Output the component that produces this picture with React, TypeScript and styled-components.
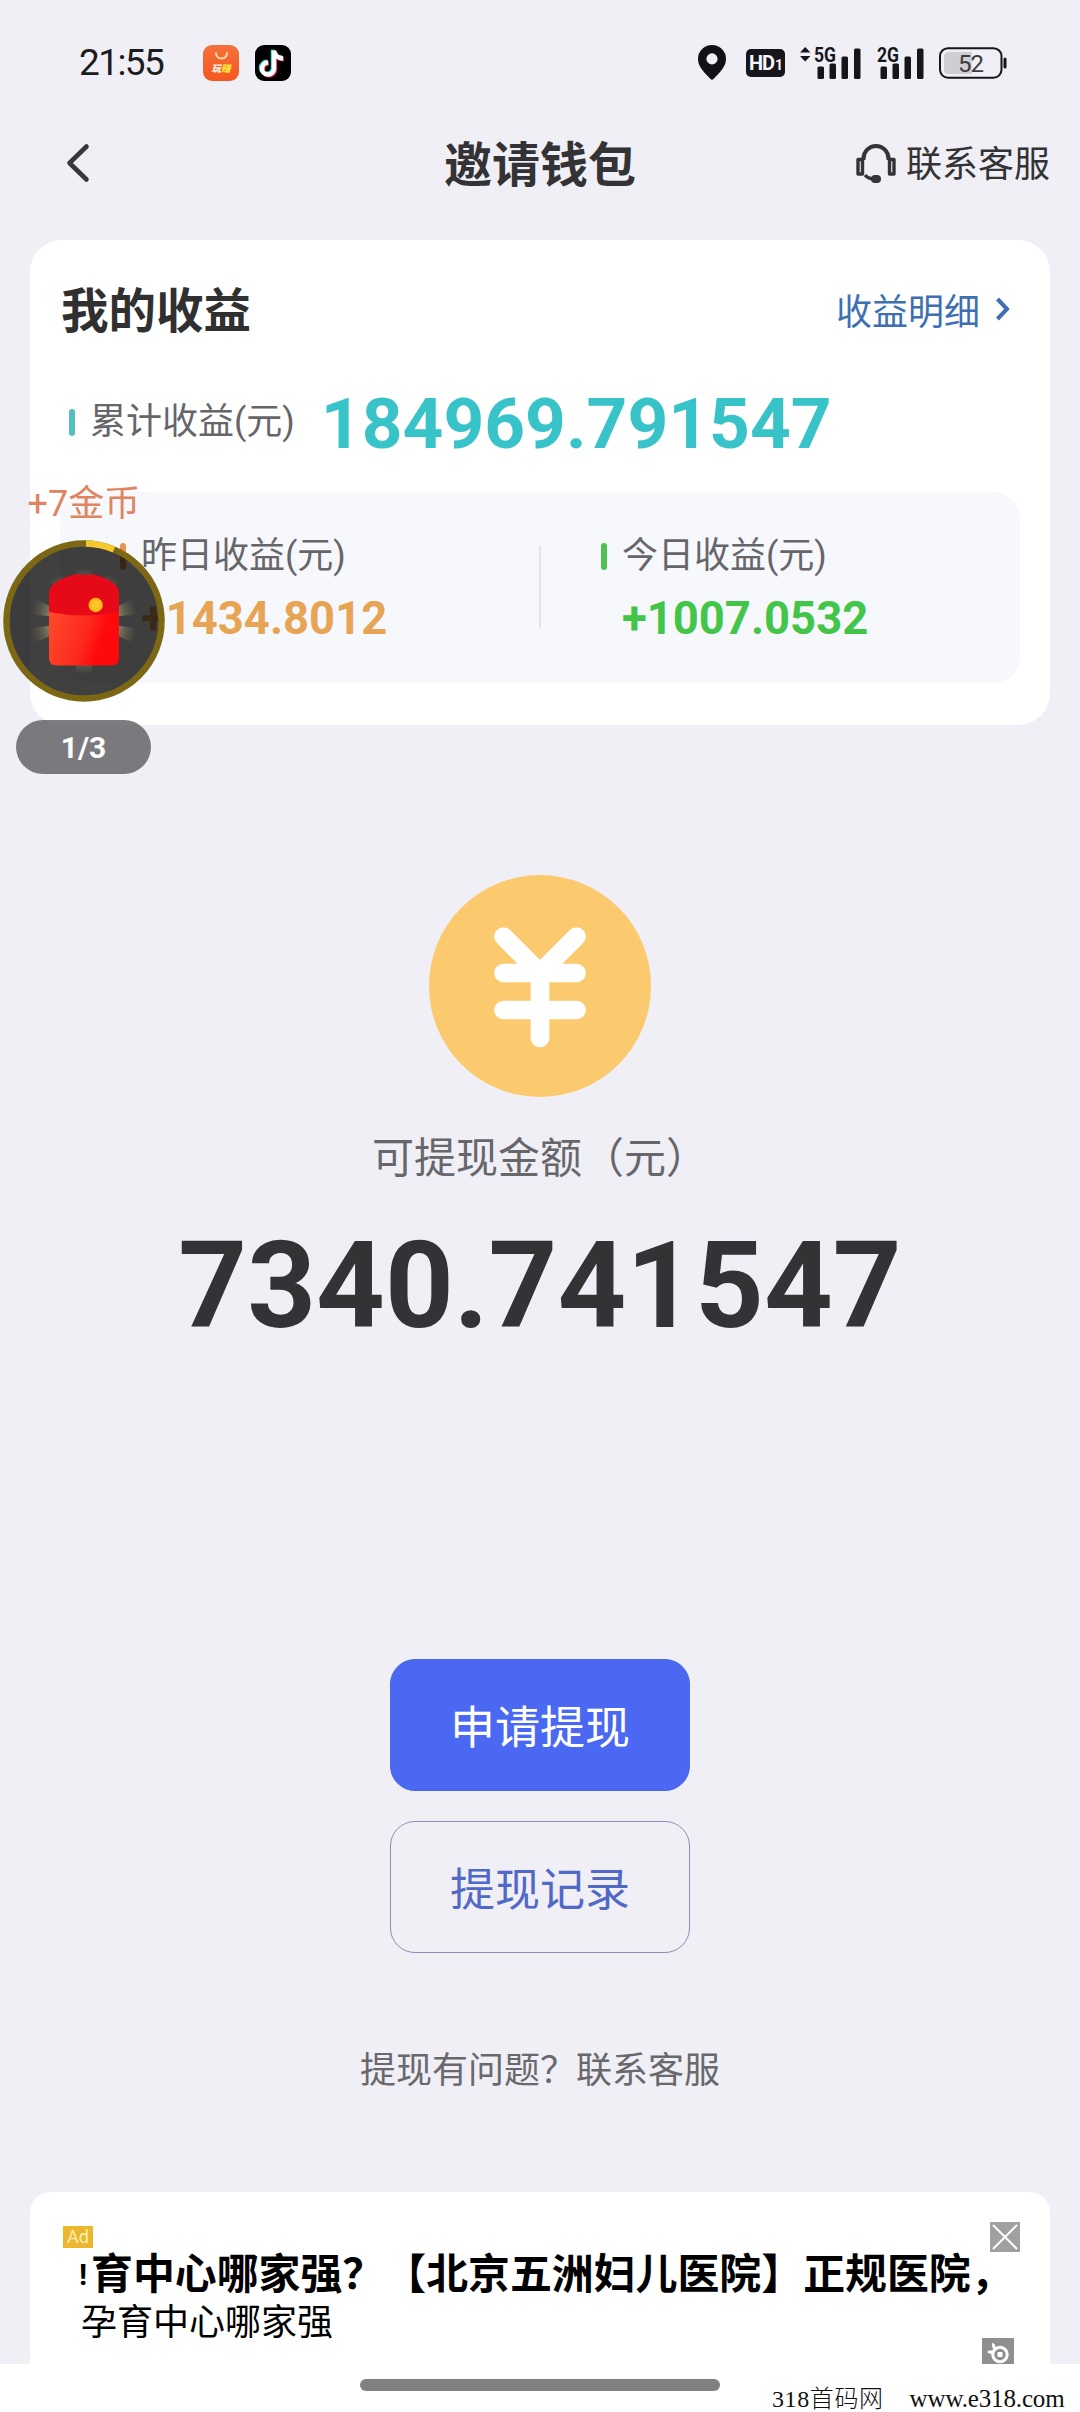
import React from 'react';
import styled, { createGlobalStyle } from 'styled-components';

const GlobalStyle = createGlobalStyle`
  * { box-sizing: border-box; }
  body { margin: 0; background: #f0eff6; }
`;

const Page = styled.div`
  position: relative;
  width: 1080px;
  height: 2412px;
  overflow: hidden;
  display: flex;
  flex-direction: column;
  background: #f0eff6;
  color: #333335;
  font-family: Roboto, "Noto Sans CJK SC", sans-serif;
`;

const StatusBar = styled.header`
  height: 124px;
  padding: 1px 73px 0 79px;
  display: flex;
  align-items: center;
  justify-content: space-between;
`;

const StatusGroup = styled.div`
  display: flex;
  align-items: center;
`;

const Clock = styled.span`
  width: 124px;
  font-size: 37px;
  line-height: 44px;
  letter-spacing: -1.6px;
  color: #1b1b20;
`;

const AppBadge = styled.span<{ $bg: string }>`
  width: 36px;
  height: 36px;
  margin-right: 16px;
  border-radius: 9px;
  display: flex;
  flex-direction: column;
  align-items: center;
  background: ${(p) => p.$bg};
`;

const BadgeText = styled.span`
  font-size: 9.5px;
  line-height: 12px;
  font-weight: 900;
  font-style: italic;
  color: #fff3e8;
  b { color: #ffe13a; }
`;

const HdBadge = styled.span`
  width: 39px;
  height: 28px;
  margin-left: 20px;
  border-radius: 5px;
  display: flex;
  align-items: baseline;
  justify-content: center;
  background: #15151b;
  color: #f5f4fa;
  font-weight: 700;
  font-size: 20px;
  line-height: 29px;
  letter-spacing: -1px;
  small { font-size: 14px; margin-left: 1px; }
`;

const NavBar = styled.nav`
  height: 116px;
  padding: 0 30px 35px;
  display: grid;
  grid-template-columns: 1fr auto 1fr;
  align-items: center;
`;

const BackIcon = styled.svg`
  margin: 0 0 3px 30px;
`;

const Title = styled.h1`
  margin: 0;
  padding-top: 3px;
  font-size: 48px;
  line-height: 56px;
  font-weight: 700;
`;

const Support = styled.div`
  justify-self: end;
  display: flex;
  align-items: center;
  gap: 10px;
  font-size: 36px;
  line-height: 44px;
`;

const HeadsetIcon = styled.svg`
  margin-bottom: 3px;
`;

const IncomeCard = styled.section`
  margin: 0 30px;
  height: 485px;
  padding: 40px 30px 0;
  border-radius: 32px;
  background: #fff;
  display: flex;
  flex-direction: column;
`;

const CardHead = styled.div`
  height: 64px;
  display: flex;
  align-items: center;
  justify-content: space-between;
`;

const CardTitle = styled.h2`
  margin: 0 0 0 1px;
  font-size: 47.5px;
  line-height: 64px;
  font-weight: 700;
  color: #303030;
`;

const DetailLink = styled.a`
  display: flex;
  align-items: center;
  gap: 15px;
  margin-right: 10px;
  padding-top: 2px;
  font-size: 36px;
  line-height: 64px;
  color: #3d70b2;
`;

const TotalRow = styled.div`
  height: 76px;
  margin-top: 40px;
  padding-left: 9px;
  display: flex;
  align-items: center;
`;

const Marker = styled.i<{ $color: string }>`
  width: 6px;
  height: 27px;
  border-radius: 3px;
  margin-right: 15px;
  background: ${(p) => p.$color};
`;

const Label = styled.span`
  font-size: 36px;
  line-height: 44px;
  color: #66666a;
`;

const TotalAmount = styled.strong`
  margin-left: 26px;
  padding-top: 4px;
  font-size: 71.2px;
  line-height: 76px;
  font-weight: 700;
  color: #38c3c9;
`;

const DayPanel = styled.div`
  height: 191px;
  margin-top: 32px;
  border-radius: 26px;
  background: #f7f8fc;
  display: grid;
  grid-template-columns: 479px 2px 479px;
`;

const DayColumn = styled.div`
  padding: 42px 0 0 60px;
`;

const DayDivider = styled.div`
  height: 82px;
  margin-top: 54px;
  background: #e2e4ea;
`;

const DayLabel = styled.div`
  height: 44px;
  display: flex;
  align-items: center;
`;

const DayAmount = styled.strong<{ $color: string }>`
  display: block;
  margin: 15px 0 0 21px;
  font-size: 45.4px;
  line-height: 52px;
  font-weight: 700;
  color: ${(p) => p.$color};
`;

const Balance = styled.main`
  margin-top: 150px;
  height: 784px;
  display: flex;
  flex-direction: column;
  align-items: center;
`;

const BalanceLabel = styled.div`
  margin-top: 36px;
  font-size: 42px;
  line-height: 52px;
  color: #66666b;
`;

const BalanceAmount = styled.strong`
  margin-top: 29px;
  font-size: 120px;
  line-height: 144px;
  font-weight: 700;
`;

const Actions = styled.div`
  display: flex;
  flex-direction: column;
  align-items: center;
  gap: 30px;
`;

const ActionButton = styled.button<{ $primary?: boolean }>`
  width: 300px;
  height: 132px;
  padding: 7px 0 0;
  border-radius: 25px;
  border: 1px solid ${(p) => (p.$primary ? '#4a69e0' : '#8a8db6')};
  background: ${(p) => (p.$primary ? '#4a68f2' : 'transparent')};
  color: ${(p) => (p.$primary ? '#fff' : '#5068c6')};
  font: 400 45px/60px Roboto, "Noto Sans CJK SC", sans-serif;
`;

const HelpText = styled.p`
  margin: 95px 0 0;
  text-align: center;
  font-size: 36px;
  line-height: 46px;
  color: #69696d;
`;

const AdCard = styled.section`
  margin: 98px 30px 0;
  height: 172px;
  padding: 30px 30px 0 33px;
  border-radius: 20px 20px 0 0;
  background: #fff;
  display: grid;
  grid-template-columns: 1fr auto;
  grid-template-rows: 30px 46px 40px 26px;
  color: #000;
`;

const AdTag = styled.span`
  width: 30px;
  height: 22px;
  margin-top: 4px;
  background: #ecb62e;
  color: #fdf0b4;
  font-size: 18px;
  line-height: 22px;
  text-align: center;
`;

const CloseIcon = styled.svg`
  justify-self: end;
`;

const AdHeadline = styled.div`
  grid-column: 1 / -1;
  display: flex;
  align-items: center;
  padding-left: 16px;
  white-space: nowrap;
  font-size: 41.9px;
  line-height: 46px;
  font-weight: 700;
`;

const ClippedMark = styled.span`
  width: 12px;
  font-size: 30px;
  line-height: 46px;
`;

const AdSub = styled.div`
  grid-column: 1 / -1;
  padding-left: 18px;
  font-size: 36px;
  line-height: 50px;
  height: 40px;
`;

const AdLogoSlot = styled.div`
  grid-column: 2;
  margin-right: 6px;
  height: 26px;
`;

const GestureArea = styled.footer`
  flex: 1;
  background: #fff;
  padding-top: 15px;
`;

const HomeBar = styled.div`
  width: 360px;
  height: 12px;
  margin: 0 auto;
  border-radius: 6px;
  background: #808080;
`;

const Watermark = styled.div`
  position: absolute;
  left: 772px;
  bottom: 0;
  display: flex;
  align-items: baseline;
  gap: 26px;
  white-space: nowrap;
  font-family: "Liberation Serif", "Noto Sans CJK SC", serif;
  font-weight: 300;
  font-size: 24px;
  line-height: 26px;
  letter-spacing: 0.6px;
  color: #111;
`;

const Site = styled.span`
  font-size: 25px;
  letter-spacing: -0.15px;
`;

const FloatingReward = styled.aside`
  position: absolute;
  left: 3px;
  top: 480px;
  width: 162px;
  display: flex;
  flex-direction: column;
`;

const CoinText = styled.span`
  margin-left: 24.5px;
  height: 60px;
  font-size: 36px;
  line-height: 48px;
  color: #e0845f;
`;

const Progress = styled.span`
  width: 135px;
  height: 54px;
  margin: 18px 0 0 13px;
  border-radius: 27px;
  background: rgba(88, 88, 92, 0.78);
  color: #fff;
  font-size: 30px;
  line-height: 55px;
  font-weight: 700;
  text-align: center;
`;

const SignalSvg = styled.svg`
  margin-left: 15px;
  overflow: visible;
`;

function SignalIcon({ label, arrows }: { label: string; arrows?: boolean }) {
  return (
    <SignalSvg width={arrows ? 61 : 48} height="34" viewBox={arrows ? '-14 0 61 34' : '-1 0 48 34'}>
      {arrows && <path d="M-14 6.5 L-8.8 1 L-3.6 6.5 Z M-14 10 L-8.8 15.5 L-3.6 10 Z" fill="#15151b" />}
      <text x="0" y="15.5" textLength="22" lengthAdjust="spacingAndGlyphs" fontFamily="Roboto, sans-serif" fontWeight="700" fontSize="21" fill="#15151b">{label}</text>
      <rect x="3.5" y="20.5" width="6.5" height="12.5" rx="1.5" fill="#15151b" />
      <rect x="15.5" y="17.5" width="6.5" height="15.5" rx="1.5" fill="#15151b" />
      <rect x="27.5" y="10.5" width="6.5" height="22.5" rx="1.5" fill="#15151b" />
      <rect x="40" y="2.5" width="6.5" height="30.5" rx="1.5" fill="#15151b" />
    </SignalSvg>
  );
}

const BatterySvg = styled.svg`
  margin-left: 15px;
`;

const LinkChevron = styled.svg`
  margin-top: -8px;
`;

function RewardDisc() {
  return (
    <svg width="162" height="162" viewBox="0 0 162 162">
      <defs>
        <linearGradient id="pocket" x1="0" y1="0.2" x2="1" y2="0.5">
          <stop offset="0" stopColor="#ff4a2c" />
          <stop offset="0.55" stopColor="#fd2a1c" />
          <stop offset="0.8" stopColor="#ff0a0c" />
        </linearGradient>
        <radialGradient id="rays" gradientUnits="userSpaceOnUse" cx="81" cy="81" r="54">
          <stop offset="0.6" stopColor="#a59b72" stopOpacity="0.85" />
          <stop offset="1" stopColor="#6b6850" stopOpacity="0" />
        </radialGradient>
      </defs>
      <circle cx="81" cy="81" r="78" fill="rgba(0,0,0,0.75)" />
      <circle cx="81" cy="81" r="77.5" fill="none" stroke="#7b6714" strokeWidth="6.5" />
      <path d="M83 3.5 A77.5 77.5 0 0 1 111 9.5" fill="none" stroke="#f3c92f" strokeWidth="6.5" />
      <path
        fill="url(#rays)"
        d="M81 81 L29 58 L29 74 Z M81 81 L29 88 L29 104 Z M81 81 L133 58 L133 74 Z M81 81 L133 88 L133 104 Z M81 81 L73 29 L89 29 Z M81 81 L44 38 L56 30 Z M81 81 L106 30 L118 38 Z M81 81 L72 133 L90 133 Z"
      />
      <path d="M46 62 H116 V118 Q116 125.5 108.5 125.5 H53.5 Q46 125.5 46 118 Z" fill="url(#pocket)" />
      <path d="M46 72 V53 Q46 47 52 43 Q62 36 72 34.5 H90 Q100 36 110 43 Q116 47 116 53 V72 Q81 79 46 72 Z" fill="#e60a18" />
      <circle cx="92.7" cy="65" r="7.2" fill="#fbb713" />
      <circle cx="92.7" cy="65" r="4.5" fill="#f9c62c" />
    </svg>
  );
}

export default function App() {
  return (
    <Page>
      <GlobalStyle />
      <StatusBar>
        <StatusGroup>
          <Clock>21:55</Clock>
          <AppBadge $bg="linear-gradient(#f5703c, #f6571f)">
            <svg width="20" height="18" viewBox="0 0 20 18">
              <path d="M5 8 Q5.5 13.5 10.5 13.5 Q15.5 13.5 16 8" fill="none" stroke="#ffd9a8" strokeWidth="2" strokeLinecap="round" />
            </svg>
            <BadgeText>玩<b>赚</b></BadgeText>
          </AppBadge>
          <AppBadge $bg="#000">
            <svg width="36" height="36" viewBox="0 0 36 36" fill="none" strokeWidth="4.4">
              <path d="M19 5.5 V24 A6 6 0 1 1 13 17.500 M19 6 Q20.5 13 28 13.5" stroke="#25e6df" transform="translate(-1 -0.7)" />
              <path d="M19 5.5 V24 A6 6 0 1 1 13 17.500 M19 6 Q20.5 13 28 13.5" stroke="#f52b54" transform="translate(1 0.9)" />
              <path d="M19 5.5 V24 A6 6 0 1 1 13 17.500 M19 6 Q20.5 13 28 13.5" stroke="#fff" />
            </svg>
          </AppBadge>
        </StatusGroup>
        <StatusGroup>
          <svg width="28" height="35" viewBox="0 0 28 35">
            <path fillRule="evenodd" fill="#111116" d="M14 0 A14 14 0 0 1 28 14 C28 22 21 28 15.5 34 Q14 35.5 12.5 34 C7 28 0 22 0 14 A14 14 0 0 1 14 0 Z M14 8.3 A5.6 5.6 0 1 0 14 19.5 A5.6 5.6 0 1 0 14 8.3 Z" />
          </svg>
          <HdBadge>HD<small>1</small></HdBadge>
          <SignalIcon label="5G" arrows />
          <SignalIcon label="2G" />
          <BatterySvg width="68" height="32" viewBox="0 0 68 32">
            <rect x="1" y="1.2" width="61.5" height="29.5" rx="8" fill="none" stroke="#15151b" strokeWidth="2" />
            <path d="M10 5 H33 V27 H10 Q5 27 5 22 V10 Q5 5 10 5 Z" fill="#cfced4" />
            <rect x="64.5" y="10.5" width="3" height="11" rx="1.5" fill="#15151b" />
            <text x="32" y="24.5" textAnchor="middle" fontFamily="Roboto, sans-serif" fontSize="24" textLength="26" fill="#3a3a40">52</text>
          </BatterySvg>
        </StatusGroup>
      </StatusBar>

      <NavBar>
        <BackIcon width="36" height="40" viewBox="0 0 36 40">
          <path d="M26.5 3.500 L9.5 20 L26.5 36.5" fill="none" stroke="#36363b" strokeWidth="4.6" strokeLinecap="round" strokeLinejoin="round" />
        </BackIcon>
        <Title>邀请钱包</Title>
        <Support>
          <HeadsetIcon width="40" height="39" viewBox="0 0 40 39" fill="none" stroke="#333338" strokeWidth="4">
            <path d="M7.5 16 V14.5 A12.5 12.5 0 0 1 32.5 14.500 V16" />
            <path d="M2 15.500 H6.500 V30 H2 Z M33.500 15.500 H38 V30 H33.500 Z" strokeWidth="3.4" strokeLinejoin="round" />
            <path d="M9 31 Q12 35 19 35" strokeWidth="3.4" />
            <rect x="15" y="31" width="10" height="8" rx="4" fill="#333338" stroke="none" />
          </HeadsetIcon>
          <span>联系客服</span>
        </Support>
      </NavBar>

      <IncomeCard>
        <CardHead>
          <CardTitle>我的收益</CardTitle>
          <DetailLink>
            收益明细
            <LinkChevron width="15" height="26" viewBox="0 0 15 26">
              <path d="M2.5 3 L12 13 L2.5 23" fill="none" stroke="#3d70b2" strokeWidth="4" />
            </LinkChevron>
          </DetailLink>
        </CardHead>
        <TotalRow>
          <Marker $color="#52bfb8" />
          <Label>累计收益(元)</Label>
          <TotalAmount>184969.791547</TotalAmount>
        </TotalRow>
        <DayPanel>
          <DayColumn>
            <DayLabel><Marker $color="#e6944f" /><Label>昨日收益(元)</Label></DayLabel>
            <DayAmount $color="#e6a454">+1434.8012</DayAmount>
          </DayColumn>
          <DayDivider />
          <DayColumn>
            <DayLabel><Marker $color="#4cc255" /><Label>今日收益(元)</Label></DayLabel>
            <DayAmount $color="#43c549">+1007.0532</DayAmount>
          </DayColumn>
        </DayPanel>
      </IncomeCard>

      <Balance>
        <svg width="222" height="222" viewBox="0 0 222 222">
          <circle cx="111" cy="111" r="111" fill="#fbca6e" />
          <path
            d="M74.5 61.5 L111 98 L147.5 61.5 M74.5 98 H147.5 M74.5 135 H147.5 M111 98 V163"
            fill="none" stroke="#fff" strokeWidth="18.7" strokeLinecap="round"
          />
        </svg>
        <BalanceLabel>可提现金额（元）</BalanceLabel>
        <BalanceAmount>7340.741547</BalanceAmount>
      </Balance>

      <Actions>
        <ActionButton $primary>申请提现</ActionButton>
        <ActionButton>提现记录</ActionButton>
      </Actions>
      <HelpText>提现有问题？联系客服</HelpText>

      <AdCard>
        <AdTag>Ad</AdTag>
        <CloseIcon width="30" height="30" viewBox="0 0 30 30">
          <rect width="30" height="30" fill="#a0a0a0" />
          <path d="M3 3 L27 27 M27 3 L3 27" stroke="#fff" strokeWidth="2" />
        </CloseIcon>
        <AdHeadline><ClippedMark>!</ClippedMark>育中心哪家强？【北京五洲妇儿医院】正规医院，</AdHeadline>
        <AdSub>孕育中心哪家强</AdSub>
        <AdLogoSlot>
          <svg width="32" height="26" viewBox="0 0 32 26">
            <rect width="32" height="26" fill="#8f8f8f" />
            <circle cx="18" cy="16.5" r="7.2" fill="none" stroke="#fff" strokeWidth="3" />
            <rect x="15.5" y="14" width="5" height="5" fill="#fff" />
            <path d="M10 5 Q14 5 13.5 11 L11.5 11 Q9.5 9 10 5 Z M5 14 Q8 11 11 13 L10 16 Q7 16 5 14 Z" fill="#fff" />
          </svg>
        </AdLogoSlot>
      </AdCard>
      <GestureArea>
        <HomeBar />
      </GestureArea>
      <Watermark><span>318首码网</span><Site>www.e318.com</Site></Watermark>

      <FloatingReward>
        <CoinText>+7金币</CoinText>
        <RewardDisc />
        <Progress>1/3</Progress>
      </FloatingReward>
    </Page>
  );
}
